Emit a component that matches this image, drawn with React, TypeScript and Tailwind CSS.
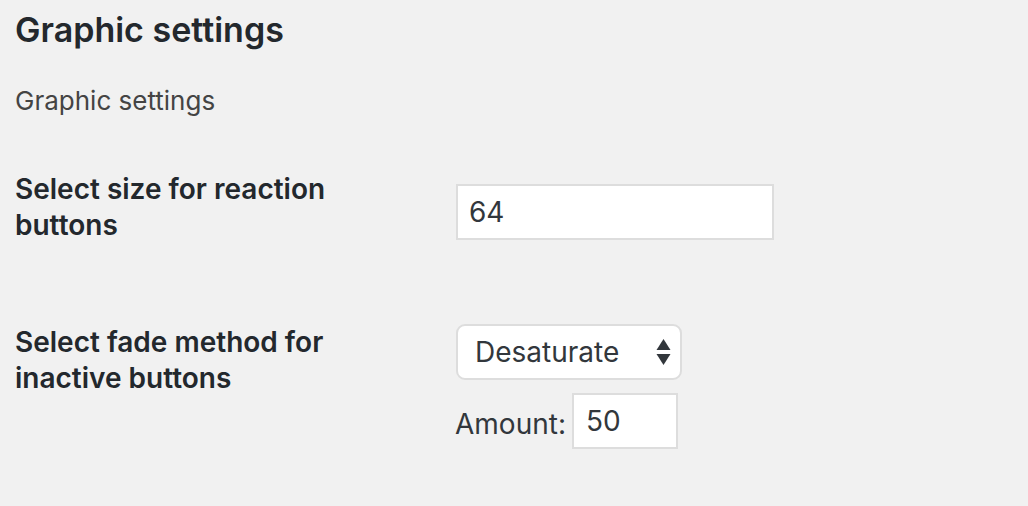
export default function App() {
  return (
    <div className="min-h-screen w-full bg-[#f1f1f1] text-[#23282d] font-['Inter','Liberation_Sans',sans-serif] px-[15px] pt-[10px]">
      {/* Section title */}
      <h2 className="text-[34px] font-semibold leading-[40px] text-[#23282d]">Graphic settings</h2>
      <p className="mt-[33px] text-[26px] leading-[36px] text-[#444]">Graphic settings</p>

      {/* Form table */}
      <div className="mt-[52px] flex flex-col">
        <div className="flex items-start">
          <div className="w-[441px] text-[28px] font-semibold leading-[36px]">
            Select size for reaction
            <br />
            buttons
          </div>
          <input
            type="text"
            defaultValue="64"
            className="mt-[13px] w-[318px] h-[56px] bg-white border-2 border-[#ddd] px-[11px] text-[28px] text-[#32373c] outline-none"
          />
        </div>

        <div className="flex items-start mt-[81px]">
          <div className="w-[441px] text-[28px] font-semibold leading-[36px]">
            Select fade method for
            <br />
            inactive buttons
          </div>
          <div className="flex flex-col items-start">
            <div className="relative w-[226px] h-[56px] bg-white border-2 border-[#ddd] rounded-[9px] flex items-center pl-[17px] text-[28px] text-[#32373c]">
              Desaturate
              <svg className="absolute right-[9px] top-[13px]" width="15" height="26" viewBox="0 0 15 26">
                <path d="M7.5 0 L14.5 11 L0.5 11 Z" fill="#32373c" />
                <path d="M0.5 15 L14.5 15 L7.5 26 Z" fill="#32373c" />
              </svg>
            </div>
            <div className="mt-[13px] flex items-center">
              <span className="text-[28px] text-[#32373c] ml-[-1px] pt-[6px]">Amount:</span>
              <input
                type="text"
                defaultValue="50"
                className="ml-[6px] w-[106px] h-[56px] bg-white border-2 border-[#ddd] px-[12px] text-[28px] text-[#32373c] outline-none"
              />
            </div>
          </div>
        </div>
      </div>
    </div>
  );
}
